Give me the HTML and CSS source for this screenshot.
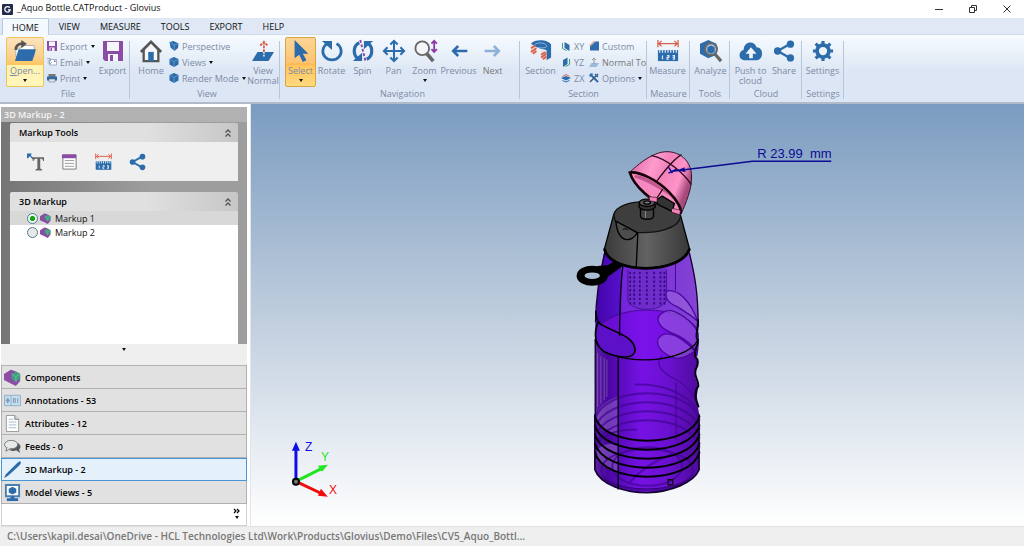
FILE: index.html
```html
<!DOCTYPE html>
<html lang="en">
<head>
    <meta charset="UTF-8">
    <meta name="viewport" content="width=device-width, initial-scale=1.0">
    <title>_Aquo Bottle.CATProduct - Glovius</title>
    <link rel="stylesheet" href="styles.css">
</head>
<body>

    <!-- Shared icons -->
    <svg class="sprite" aria-hidden="true">
        <symbol id="i-floppy" viewBox="0 0 20 20">
            <path fill="#8c4ba5" d="M0 0h20v20H2l-2-2z"/>
            <path fill="#f4f6fc" d="M4 1h12v9H4zM5 13h10v7H5z"/>
            <path fill="#8c4ba5" d="M7 14h3v6H7z"/>
        </symbol>
        <symbol id="i-cube" viewBox="0 0 20 20">
            <path fill="#2c6cab" d="M10 0l9 4v11l-9 5-9-5V4z"/>
            <path stroke="#8fb9e2" fill="none" d="M1 4l9 5 9-5M10 9v11"/>
        </symbol>
        <symbol id="i-ruler" viewBox="0 0 24 24">
            <path stroke="#d9604a" stroke-width="1.4" fill="none" d="M2 4h20M5 1L2 4l3 3M19 1l3 3-3 3M1 0v8M23 0v8"/>
            <path fill="#2c6cab" d="M1 11h22v12H1z"/>
            <path stroke="#dce9f8" stroke-width="1.3" d="M3 11v3M6 11v3M9 11v3M12 11v3M15 11v3M18 11v3M21 11v3M6 17v4M11 17h2v2h-2v2h2M17 17h2v4h-2M17 19h2" fill="none"/>
        </symbol>
        <symbol id="i-share" viewBox="0 0 24 24">
            <path stroke="#2c6cab" stroke-width="2.6" fill="none" d="M19 4L5 12l14 8"/>
            <g fill="#2c6cab"><circle cx="19" cy="4.500" r="4"/><circle cx="5" cy="12" r="4"/><circle cx="19" cy="19.500" r="4"/></g>
        </symbol>
        <symbol id="i-component" viewBox="0 0 20 20">
            <path fill="#8c4ba5" d="M0 6l8-5 4 1 7 4v8l-5 6-6-3-8-4z"/>
            <path fill="#3f9b7c" d="M9 6l5-3 5 3v6l-5 3-5-3z"/>
            <path stroke="#6cc7a6" fill="none" d="M9 6l5 3 5-3M14 9v6"/>
        </symbol>
        <symbol id="i-arrow" viewBox="0 0 24 24">
            <path fill="none" stroke="currentColor" stroke-width="3" d="M22 12H4M11 6l-6 6 6 6"/>
        </symbol>
        <symbol id="i-collapse" viewBox="0 0 8 10">
            <path fill="none" stroke="#555" stroke-width="1.3" d="M1.500 4.500L4 2l2.500 2.500M1.500 8.500L4 6l2.500 2.500"/>
        </symbol>
    </svg>

    <!-- Title bar -->
    <header class="titlebar">
        <svg class="app-icon" viewBox="0 0 12 12"><rect width="12" height="12" rx="1" fill="#232c4d"/><path d="M8.500 4A3 3 0 1 0 9 6.500H6.500" fill="none" stroke="#fff" stroke-width="1.400"/></svg>
        <h1>_Aquo Bottle.CATProduct - Glovius</h1>
        <div class="window-buttons">
            <button type="button" aria-label="Minimize"><svg viewBox="0 0 10 10"><path d="M1 5.500h8"/></svg></button>
            <button type="button" aria-label="Restore"><svg viewBox="0 0 10 10"><path d="M1.500 3.500h5v5h-5zM3.500 3.500v-2h5v5h-2"/></svg></button>
            <button type="button" aria-label="Close"><svg viewBox="0 0 10 10"><path d="M1.500 1.500l7 7M8.500 1.500l-7 7"/></svg></button>
        </div>
    </header>

    <!-- Tabs -->
    <nav class="tabs">
        <button type="button" class="active">HOME</button>
        <button type="button">VIEW</button>
        <button type="button">MEASURE</button>
        <button type="button">TOOLS</button>
        <button type="button">EXPORT</button>
        <button type="button">HELP</button>
    </nav>

    <!-- Ribbon -->
    <div class="ribbon">
        <section class="group group-file">
            <div class="tools">
                <button type="button" class="big open">
                    <svg viewBox="0 0 24 24"><path fill="#fff" stroke="#aab" d="M2 9h5l2-3h13v12H2z"/><path fill="#2c6cab" d="M5 10h19l-4 13H1z"/><path fill="none" stroke="#555" stroke-width="3" d="M2 11c0-6 3-7 8-7"/><path fill="#555" d="M8 0l6 4-6 5z"/></svg>
                    <span><u>O</u>pen...</span><i class="caret"></i>
                </button>
                <div class="stack">
                    <button type="button"><svg><use href="#i-floppy"/></svg>Export<i class="caret"></i></button>
                    <button type="button"><svg viewBox="0 0 20 20"><path fill="#fff" stroke="#8b9bb8" stroke-width="1.500" d="M5 5h14v11H5z"/><path fill="none" stroke="#8b9bb8" stroke-width="1.500" d="M5 15l5-5M0 3h7v5M1 8h6M1 12h6"/><path fill="#8c4ba5" d="M14 7h3v3h-3z"/></svg>Email<i class="caret"></i></button>
                    <button type="button"><svg viewBox="0 0 20 20"><path fill="#777" d="M3 2h14v6H3z"/><path fill="#2c6cab" d="M0 7h20v8H0z"/><path fill="#dfe6f0" stroke="#666" d="M4 12h12v6H4z"/></svg>Print<i class="caret"></i></button>
                </div>
                <button type="button" class="big export"><svg><use href="#i-floppy"/></svg><span>Export</span></button>
            </div>
            <h2>File</h2>
        </section>

        <section class="group group-view">
            <div class="tools">
                <button type="button" class="big">
                    <svg viewBox="0 0 24 24"><path fill="#f5f7fb" d="M4 11l8-8 8 8v12H4z"/><path fill="none" stroke="#555" stroke-width="2.500" d="M4 11v12h16V11"/><path fill="none" stroke="#555" stroke-width="3" d="M1 13L12 2l11 11"/><path fill="#2c6cab" d="M9 13h6v10H9z"/></svg>
                    <span>Home</span>
                </button>
                <div class="stack">
                    <button type="button"><svg viewBox="0 0 20 20"><path fill="#2c6cab" d="M1 2l8-2 10 5-1 9-7 6-8-7z"/><path fill="none" stroke="#8fb9e2" d="M1 2l9 6 9-3M10 8l1 12"/></svg>Perspective</button>
                    <button type="button"><svg><use href="#i-cube"/></svg>Views<i class="caret"></i></button>
                    <button type="button"><svg><use href="#i-cube"/></svg>Render Mode<i class="caret"></i></button>
                </div>
                <button type="button" class="big">
                    <svg viewBox="0 0 24 24"><path fill="#2c6cab" d="M6 13h18l-6 10H0z"/><path fill="none" stroke="#d9604a" stroke-width="2" stroke-dasharray="3 1" d="M13 13V3M9 6l4-4 4 4"/><path stroke="#fff" stroke-width="1.500" stroke-dasharray="2 1" d="M13 13v6"/></svg>
                    <span>View<br>Normal</span>
                </button>
            </div>
            <h2>View</h2>
        </section>

        <section class="group group-navigation">
            <div class="tools">
                <button type="button" class="big selected">
                    <svg viewBox="0 0 24 24"><path fill="#2c6cab" d="M5 0v20l5-4 4 8 4-2-4-7h6z"/></svg>
                    <span>Select</span><i class="caret"></i>
                </button>
                <button type="button" class="big">
                    <svg viewBox="0 0 24 24"><path fill="none" stroke="#2c6cab" stroke-width="3" d="M17 4a10 9.500 0 1 1-10 0"/><path fill="#2c6cab" d="M1 1h11v10z"/></svg>
                    <span>Rotate</span>
                </button>
                <button type="button" class="big">
                    <svg viewBox="0 0 24 24"><path fill="none" stroke="#2c6cab" stroke-width="3.500" d="M8 3C1 6 1 16 6 20M16 21c7-3 7-13 2-17"/><path fill="#2c6cab" d="M1 23h10V14zM23 1H13v9z"/><path stroke="#8c3ba5" stroke-width="2" stroke-dasharray="3 2" d="M9 0l6 24"/></svg>
                    <span>Spin</span>
                </button>
                <button type="button" class="big">
                    <svg viewBox="0 0 24 24"><path fill="none" stroke="#2c6cab" stroke-width="2.200" d="M12 1v22M1 12h22M8 5l4-4 4 4M8 19l4 4 4-4M5 8l-4 4 4 4M19 8l4 4-4 4"/></svg>
                    <span>Pan</span>
                </button>
                <button type="button" class="big">
                    <svg viewBox="0 0 24 24"><circle cx="9" cy="9" r="7.500" fill="#f2f5fa" stroke="#666" stroke-width="2"/><path stroke="#666" stroke-width="4" d="M14 15l7 8"/><path fill="none" stroke="#8c3ba5" stroke-width="2" d="M22 1v12M19 4l3-3 3 3M19 10l3 3 3-3"/></svg>
                    <span>Zoom</span><i class="caret"></i>
                </button>
                <button type="button" class="big previous"><svg><use href="#i-arrow"/></svg><span>Previous</span></button>
                <button type="button" class="big next"><svg><use href="#i-arrow"/></svg><span>Next</span></button>
            </div>
            <h2>Navigation</h2>
        </section>

        <section class="group group-section">
            <div class="tools">
                <button type="button" class="big">
                    <svg viewBox="0 0 24 24"><path fill="#2c6cab" d="M1 4c4-5 18-5 22 1v14l-5 3V11c-3-1-7-1-11-3z"/><path fill="none" stroke="#8fb9e2" d="M5 5c4-3 11-2 13 1s-7 3-10 2"/><path fill="#f3d9d4" d="M1 5l6 3v8l-6-3zM12 11l6 3v9l-6-4z"/><path stroke="#d9604a" stroke-width="2" d="M1 9l5-3M1 13l6-4M3 15l4-3M12 16l5-3M12 19l6-4M14 21l4-3"/></svg>
                    <span>Section</span>
                </button>
                <div class="stack planes">
                    <button type="button"><svg viewBox="0 0 20 20"><path fill="#2c6cab" d="M7 2l10 6v12L7 14z"/><path stroke="#3f9b7c" stroke-width="2" fill="none" d="M3 4v11l8 4"/></svg>XY</button>
                    <button type="button"><svg viewBox="0 0 20 20"><path fill="#2c6cab" d="M4 6l9-5v13l-9 6z"/><path stroke="#3f9b7c" stroke-width="2" fill="none" d="M17 4v11l-8 4"/></svg>YZ</button>
                    <button type="button"><svg viewBox="0 0 20 20"><path fill="#2c6cab" d="M0 10l10-4 10 4-10 5z"/><path stroke="#d9604a" stroke-width="2" fill="none" d="M3 7l7-4 7 4"/><path stroke="#2c6cab" stroke-width="2" fill="none" d="M3 15l7 3 7-3"/></svg>ZX</button>
                </div>
                <div class="stack">
                    <button type="button"><svg viewBox="0 0 20 20"><path fill="#2c6cab" d="M2 11L13 1h7v18H2z"/><path stroke="#d9604a" stroke-width="2" d="M1 10L11 0"/></svg>Custom</button>
                    <button type="button" class="normal-to"><svg viewBox="0 0 20 20"><path fill="#9db9db" d="M5 12h15l-5 8H0z"/><path fill="none" stroke="#999" stroke-width="2" d="M10 14V2M6 6l4-4 4 4"/></svg>Normal To</button>
                    <button type="button"><svg viewBox="0 0 20 20"><path stroke="#2c6cab" stroke-width="4" d="M2 2l16 16"/><path stroke="#456" stroke-width="3" d="M18 2L2 18"/><path stroke="#2c6cab" stroke-width="3" fill="none" d="M1 7l6-6M12 2l6 6"/></svg>Options<i class="caret"></i></button>
                </div>
            </div>
            <h2>Section</h2>
        </section>

        <section class="group group-measure">
            <div class="tools">
                <button type="button" class="big"><svg><use href="#i-ruler"/></svg><span>Measure</span></button>
            </div>
            <h2>Measure</h2>
        </section>

        <section class="group group-tools">
            <div class="tools">
                <button type="button" class="big">
                    <svg viewBox="0 0 24 24"><path fill="#2c6cab" d="M0 4l9-4 9 4v12l-9 4-9-5z"/><circle cx="12" cy="10" r="6.500" fill="#a9c6e6" stroke="#666" stroke-width="2.200"/><path fill="#2c6cab" d="M8 8l4-2 4 2v5l-4 2-4-2z"/><path stroke="#666" stroke-width="3.500" d="M16 15l7 8"/></svg>
                    <span>Analyze</span>
                </button>
            </div>
            <h2>Tools</h2>
        </section>

        <section class="group group-cloud">
            <div class="tools">
                <button type="button" class="big">
                    <svg viewBox="0 0 24 24"><path fill="#2c6cab" d="M5 22a5 5.500 0 0 1-1-11C4 1 16 0 18 8c8 0 8 13 1 14z"/><path fill="#edf4fc" d="M12 8l6 7h-4v5h-4v-5H6z"/></svg>
                    <span>Push to<br>cloud</span>
                </button>
                <button type="button" class="big"><svg><use href="#i-share"/></svg><span>Share</span></button>
            </div>
            <h2>Cloud</h2>
        </section>

        <section class="group group-settings">
            <div class="tools">
                <button type="button" class="big">
                    <svg viewBox="0 0 24 24"><circle cx="12" cy="12" r="6.500" fill="none" stroke="#2c6cab" stroke-width="4"/><path stroke="#2c6cab" stroke-width="3.500" d="M12 1v4M12 19v4M1 12h4M19 12h4M4 4l3 3M17 17l3 3M4 20l3-3M17 7l3-3"/></svg>
                    <span>Settings</span>
                </button>
            </div>
            <h2>Settings</h2>
        </section>
    </div>

    <div class="workspace">
        <!-- Side panel -->
        <aside class="sidebar">
            <h2 class="sidebar-title">3D Markup - 2</h2>
            <div class="panels">
                <section class="panel">
                    <header><h3>Markup Tools</h3><button type="button" aria-label="Collapse"><svg><use href="#i-collapse"/></svg></button></header>
                    <div class="markup-tools">
                        <button type="button" aria-label="Text"><svg viewBox="0 0 18 18"><path fill="#2c6cab" d="M0 0h5L4 2l3 3-1 1-3-3-2 2H0z"/><path fill="#666" d="M6 4h12v4h-1c0-2-1-2.500-3-2.500V16l2 1v1H9v-1l2-1V5.500C8 5.500 7 6 7 8H6z"/></svg></button>
                        <button type="button" aria-label="Note"><svg viewBox="0 0 18 18"><path fill="#fff" stroke="#777" d="M2 1.500h14v15H2z"/><path fill="#8c4ba5" d="M1 1h15v4H1z"/><path stroke="#999" d="M4 7.500h10M4 10.500h10M4 13.500h10"/></svg></button>
                        <button type="button" aria-label="Measure"><svg><use href="#i-ruler"/></svg></button>
                        <button type="button" aria-label="Share"><svg><use href="#i-share"/></svg></button>
                    </div>
                </section>
                <section class="panel panel-list">
                    <header><h3>3D Markup</h3><button type="button" aria-label="Collapse"><svg><use href="#i-collapse"/></svg></button></header>
                    <div class="markup-list">
                        <label class="current"><input type="radio" name="markup" checked><svg><use href="#i-component"/></svg>Markup 1</label>
                        <label><input type="radio" name="markup"><svg><use href="#i-component"/></svg>Markup 2</label>
                    </div>
                </section>
            </div>
            <div class="splitter"><i class="caret"></i></div>
            <nav class="sections">
                <button type="button"><svg><use href="#i-component"/></svg>Components</button>
                <button type="button"><svg viewBox="0 0 18 18"><path fill="#c4def0" stroke="#8fb0c8" d="M.5 3.500h17v11H.5zM7.500 3.500v11"/><path fill="none" stroke="#7f98ad" d="M2 9h4M4 6v6M10 7h2v4h-2zM14.500 6.500v5"/><circle cx="4" cy="9" r="1.500" fill="none" stroke="#7f98ad"/></svg>Annotations - 53</button>
                <button type="button"><svg viewBox="0 0 18 18"><path fill="#fff" stroke="#999" d="M2.500.5h9l4 4v13h-13z"/><path fill="#ddd" stroke="#777" d="M11.500.5v4h4"/><path stroke="#a9b8c8" d="M5 4.500h5M5 7.500h8M5 10.500h8M5 13.500h8"/></svg>Attributes - 12</button>
                <button type="button"><svg viewBox="0 0 18 18"><path fill="#55595f" d="M6 13c2 1 5 1 7 0l4 3-1-4c3-2 1-6-2-7z"/><ellipse cx="7.500" cy="7" rx="7" ry="4.500" fill="#e6e8ea" stroke="#777"/><path fill="#e6e8ea" stroke="#777" d="M3 10l-1 4 5-3"/></svg>Feeds - 0</button>
                <button type="button" class="active"><svg viewBox="0 0 18 18"><path fill="#2c6cab" d="M0 18l2-4L14 2l3-2 1 2-2 3L4 16z"/></svg>3D Markup - 2</button>
                <button type="button"><svg viewBox="0 0 18 18"><path fill="#fff" stroke="#4c7eb0" stroke-width="2" d="M2 1h14v12H2z"/><path fill="#2c6cab" d="M9 3l4 2v4l-4 2-4-2V5zM7 13h4v2h4v3H3v-3h4z"/></svg>Model Views - 5</button>
            </nav>
            <div class="more">
                <button type="button" aria-label="More sections"><svg viewBox="0 0 8 6"><path fill="none" stroke="#000" stroke-width="1.200" d="M1 1l2 2-2 2M4 1l2 2-2 2"/></svg><i class="caret"></i></button>
            </div>
        </aside>

        <!-- 3D view -->
        <main class="viewport">
            <svg class="scene" viewBox="250 104 774 422">
                <defs>
                    <linearGradient id="bodyFill">
                        <stop offset="0" stop-color="#5a22a0"/>
                        <stop offset=".12" stop-color="#4a06a0"/>
                        <stop offset=".25" stop-color="#5b0bc0"/>
                        <stop offset=".45" stop-color="#7612e4"/>
                        <stop offset=".7" stop-color="#6a10cf"/>
                        <stop offset="1" stop-color="#4e0b9c"/>
                    </linearGradient>
                    <linearGradient id="shoulderFill">
                        <stop offset="0" stop-color="#4204a8"/>
                        <stop offset=".24" stop-color="#5610cc"/>
                        <stop offset=".26" stop-color="#7424dc"/>
                        <stop offset="1" stop-color="#8444d4"/>
                    </linearGradient>
                    <linearGradient id="lidFill">
                        <stop offset="0" stop-color="#3a3a3a"/>
                        <stop offset=".5" stop-color="#626262"/>
                        <stop offset="1" stop-color="#383838"/>
                    </linearGradient>
                    <linearGradient id="pinkFill" x1="0" y1="0" x2="1" y2=".4">
                        <stop offset="0" stop-color="#d2609c"/>
                        <stop offset=".4" stop-color="#ff9bcd"/>
                        <stop offset=".6" stop-color="#f283bb"/>
                        <stop offset=".85" stop-color="#ff94c8"/>
                        <stop offset="1" stop-color="#a84a7c"/>
                    </linearGradient>
                    <path id="ring" d="M103 830C130 927 390 927 417 830"/>
                    <path id="backRing" d="M103 840C130 734 390 734 417 840"/>
                    <path id="holes" d="M0 398V492"/>
                </defs>

                <!-- Bottle, drawn at three times its size -->
                <g transform="translate(560 140) scale(.3333)" stroke-linecap="round" fill="none">
                    <path fill="url(#bodyFill)" d="M105 510L104 590L103 990C120 1038 200 1059 260 1059C330 1056 400 1030 416 990V820L408 780L413 740L404 710L412 670L404 640L413 590L413 510Z"/>
                    <path fill="url(#shoulderFill)" d="M132 330C118 400 106 470 105 575C150 490 370 490 413 575C416 460 400 390 387 330Z"/>
                    <ellipse cx="260" cy="585" rx="150" ry="72" fill="#7d12ef" opacity=".6"/>
                    <path stroke="#4b07a0" stroke-width="3" d="M106 570C150 490 370 490 413 570M345 350V450"/>

                    <!-- strainer -->
                    <path fill="#6a2cc4" opacity=".7" d="M202 385V480C210 515 300 520 318 480V385Z"/>
                    <path stroke="#4a129a" stroke-width="3" d="M202 390V480C210 515 300 520 318 480V390"/>
                    <g stroke="#3a0a84" stroke-width="6" stroke-dasharray="2 11">
                        <use href="#holes" x="209"/><use href="#holes" x="221"/><use href="#holes" x="238"/><use href="#holes" x="259"/><use href="#holes" x="281"/><use href="#holes" x="300"/><use href="#holes" x="312"/>
                    </g>

                    <!-- grips -->
                    <g fill="#a06cdf" fill-opacity=".5" stroke="#4b08a0" stroke-width="4">
                        <path d="M412 545C390 480 350 445 318 453C310 480 330 492 350 500C380 520 400 530 412 545Z"/>
                        <path d="M413 580C400 545 340 500 312 515C280 530 290 560 330 577C370 592 395 610 410 640C414 620 414 600 413 580Z"/>
                        <path d="M409 650C400 620 340 570 305 585C280 600 290 630 330 650C360 665 385 645 409 630Z"/>
                    </g>
                    <path stroke="#4b08a0" stroke-width="4" d="M305 648C285 665 295 690 330 710C370 728 400 760 412 795M347 730V900"/>
                    <g stroke="#9277ae" stroke-width="3" opacity=".6"><path d="M111 640V800M121 650V790M131 655V780M139 660V770"/></g>

                    <!-- rings -->
                    <path fill="#b79ad8" opacity=".35" d="M106 835C112 800 140 780 172 770V890C140 880 112 860 106 835ZM110 930C130 910 150 910 172 915V1000C140 990 120 970 110 950Z"/>
                    <g stroke="#410693" stroke-width="6" opacity=".7">
                        <path d="M226 734C290 732 370 750 410 810"/>
                        <use href="#backRing"/><use href="#backRing" y="27"/><use href="#backRing" y="54"/><use href="#backRing" y="81"/>
                        <path d="M106 920C120 890 160 868 226 870"/>
                        <ellipse cx="260" cy="980" rx="105" ry="58"/><ellipse cx="260" cy="990" rx="138" ry="62"/>
                        <path d="M205 1030C240 990 290 960 330 945"/>
                    </g>
                    <g stroke="#000" stroke-width="6">
                        <use href="#ring"/><use href="#ring" y="27"/><use href="#ring" y="54"/><use href="#ring" y="81"/><use href="#ring" y="108"/>
                    </g>
                    <path stroke="#14002c" stroke-width="5" d="M103 825V990C120 1038 200 1059 260 1059C330 1056 400 1030 416 990V825"/>
                    <path stroke="#30056a" stroke-width="3" d="M105 992C140 1065 370 1068 415 992"/>
                    <path stroke="#111" stroke-width="4" d="M323 1020h14v15h-14z"/>

                    <!-- outlines -->
                    <path stroke="#160033" stroke-width="4" d="M132 340C118 400 106 470 105 545M387 340C402 400 414 460 413 560M104 600V825"/>
                    <path stroke="#0b0018" stroke-width="6" d="M413 540C413 575 402 590 412 600C416 615 400 625 404 650C415 660 414 675 405 690C400 712 414 718 414 738C400 755 404 775 414 800"/>
                    <path stroke="#000" stroke-width="4" d="M187 380C180 430 178 500 177 590M173 650V1048"/>
                    <path stroke="#000" stroke-width="4" d="M104 600C130 680 370 680 413 600"/>
                    <path fill="#5c10c8" d="M112 548C140 585 220 590 224 630C222 660 170 655 130 635C105 615 98 585 112 548Z"/>
                    <path stroke="#000" stroke-width="5" d="M106 515C106 530 112 548 125 556C160 575 222 590 224 630C222 660 170 655 130 635C105 615 98 585 112 548"/>

                    <!-- carry loop -->
                    <path fill="#000" d="M110 378L142 375L165 362L187 378L140 412Z"/>
                    <ellipse cx="95" cy="407" rx="35" ry="18" stroke="#000" stroke-width="24"/>
                    <ellipse cx="95" cy="407" rx="23" ry="10" fill="#a9bdd5"/>

                    <!-- lid -->
                    <path fill="url(#lidFill)" stroke="#000" stroke-width="4" d="M160 222L132 325C150 402 360 402 387 325L360 225Z"/>
                    <path stroke="#000" stroke-width="8" d="M132 328C150 404 360 404 387 328"/>
                    <path fill="#3e3e3e" stroke="#111" stroke-width="4" d="M160 225C165 170 355 170 360 230C355 265 290 280 230 277L164 243Z"/>
                    <path fill="#4d4d4d" stroke="#000" stroke-width="4" d="M166 243C172 312 215 308 230 278ZM232 280L227 384"/>
                    <path stroke="#000" stroke-width="3" d="M188 268C194 264 200 266 202 270"/>
                    <path fill="#444" stroke="#000" stroke-width="4" d="M240 200V230C245 240 275 240 279 230V200"/>
                    <path stroke="#888" stroke-width="3" d="M255 210V232"/>
                    <ellipse cx="260" cy="197" rx="25" ry="13" fill="#333" stroke="#000" stroke-width="4"/>
                    <ellipse cx="260" cy="188" rx="24" ry="11" fill="#555" stroke="#000" stroke-width="4"/>
                    <ellipse cx="260" cy="187" rx="10" ry="5" fill="#777" stroke="#000" stroke-width="4"/>

                    <!-- cap -->
                    <path fill="url(#pinkFill)" stroke="#3a1028" stroke-width="3" d="M207 97C235 70 260 52 285 42C335 20 388 48 393 100C397 145 375 190 362 222L333 212Z"/>
                    <path fill="#f48abf" stroke="#150008" stroke-width="8" d="M208 97C235 92 290 120 325 155C352 182 364 208 360 218C350 222 335 213 318 200C280 188 220 140 208 97Z"/>
                    <path fill="#c2588e" d="M222 106C250 100 300 132 330 168C280 135 245 118 222 112Z"/>
                    <path stroke="#2a0a1c" stroke-width="4" d="M274 46C320 55 370 100 392 132M362 44C335 60 310 95 289 123M306 148L287 178"/>
                    <path fill="#333" stroke="#000" stroke-width="4" d="M290 178L305 168L342 190L335 214L290 192Z"/>
                    <path fill="#f283bb" stroke="#3a1028" stroke-width="2" d="M335 205L360 210L358 224L334 216ZM266 170L290 172V186L268 182Z"/>
                </g>

                <!-- Radius callout -->
                <path class="callout" d="M668 167l4 6M668 173l8-4M672 171l80-10h79"/>
                <path class="callout-head" d="M677 170l7-3 1 5z"/>
                <text class="callout-text" x="757" y="158" xml:space="preserve">R 23.99  mm</text>

                <!-- Axes -->
                <g stroke-width="3">
                    <path stroke="#0f0fe6" d="M295 481v-32"/><path fill="#0f0fe6" d="M291 451l4-9 4 9z"/>
                    <path stroke="#1fe61f" d="M296 481l26-13"/><path fill="#1fe61f" d="M317 466l10-1-6 7z"/>
                    <path stroke="#f00a0a" d="M296 482l25 12"/><path fill="#f00a0a" d="M317 496l10 1-7-8z"/>
                </g>
                <circle cx="295" cy="482" r="3" fill="#777" stroke="#000" stroke-width="2"/>
                <text class="axis axis-z" x="304" y="451">Z</text>
                <text class="axis axis-y" x="320" y="461">Y</text>
                <text class="axis axis-x" x="328" y="494">X</text>
            </svg>
        </main>
    </div>

    <footer class="statusbar">C:\Users\kapil.desai\OneDrive - HCL Technologies Ltd\Work\Products\Glovius\Demo\Files\CV5_Aquo_Bottl...</footer>

</body>
</html>
```

FILE: styles.css
```css
* {
    box-sizing: border-box;
}
body {
    margin: 0;
    height: 100vh;
    display: flex;
    flex-direction: column;
    font-family: "Open Sans", "Noto Sans", sans-serif;
    font-size: 9px;
    color: #111;
    background-color: #fff;
    overflow: hidden;
}
h1, h2, h3 {
    margin: 0;
    font-size: inherit;
    font-weight: normal;
}
button {
    font: inherit;
    color: inherit;
    background: none;
    border: 0;
    padding: 0;
    margin: 0;
    cursor: pointer;
}
svg {
    display: block;
    flex: none;
}
.sprite {
    display: none;
}
.caret {
    width: 0;
    height: 0;
    border: 2px solid transparent;
    border-top: 3px solid #111;
    border-bottom: 0;
}

/* Title bar */
.titlebar {
    display: flex;
    align-items: center;
    height: 18px;
    padding-left: 2px;
    gap: 4px;
}
.app-icon {
    width: 11px;
    height: 11px;
}
.titlebar h1 {
    flex: 1;
    line-height: 16px;
    padding-bottom: 2px;
}
.window-buttons {
    display: flex;
}
.window-buttons button {
    width: 34px;
    display: flex;
    justify-content: center;
}
.window-buttons svg {
    width: 10px;
    height: 10px;
    fill: none;
    stroke: #333;
}

/* Tabs */
.tabs {
    display: flex;
    height: 17px;
    padding-left: 2px;
    background-color: #dfe8f4;
    border-bottom: 1px solid #d0dae8;
}
.tabs button {
    height: 17px;
    padding: 0 10px;
}
.tabs .active {
    padding: 0 9px;
    background-color: #f4f9ff;
    border: 1px solid #b9c9de;
    border-bottom: 0;
    border-radius: 2px 2px 0 0;
}

/* Ribbon */
.ribbon {
    display: flex;
    height: 69px;
    padding-top: 2px;
    background: linear-gradient(#f6fbff, #dce6f4 55%, #dce7f5);
    border-bottom: 2px solid #b0bac9;
    color: #7c8aa5;
}
.group {
    display: flex;
    flex-direction: column;
    background: linear-gradient(#b9c5d8, #b9c5d8) right center / 1px 58px no-repeat;
}
.group h2 {
    text-align: center;
    line-height: 14px;
}
.tools {
    display: flex;
    height: 50px;
}
.group-file {
    width: 130px;
    padding-left: 6px;
}
.group-view {
    width: 150px;
    padding-left: 4px;
}
.group-navigation {
    width: 240px;
    padding-left: 5px;
}
.group-section {
    width: 127px;
}
.group-measure {
    width: 43px;
}
.group-tools {
    width: 40px;
}
.group-cloud {
    width: 72px;
}
.group-settings {
    width: 42px;
}
.big {
    display: flex;
    flex-direction: column;
    align-items: center;
    width: 31px;
    flex: none;
    padding-top: 3px;
    line-height: 10px;
    white-space: nowrap;
}
.big svg {
    width: 22px;
    height: 22px;
    margin-bottom: 4px;
    overflow: visible;
}
.big .caret {
    margin-top: 3px;
}
.open {
    width: 38px;
    padding-top: 2px;
    border: 1px solid #f0c35a;
    border-radius: 2px;
    background: linear-gradient(#fde3bd, #fbd08c 40%, #fdc65d 56%, #fff3b0 57%, #fff6bd);
}
.export {
    width: 36px;
}
.export svg {
    width: 20px;
}
.selected {
    padding-top: 2px;
    border: 1px solid #d6a640;
    border-radius: 2px;
    background: linear-gradient(#fcd596, #fdc473 50%, #ffb84e 56%, #ffc55d 57%, #ffd97e);
}
.group-view .big {
    width: 34px;
}
.group-section .big,
.group-measure .big,
.group-tools .big,
.group-cloud .big,
.group-settings .big {
    width: 41px;
}
.group-cloud .big + .big {
    width: 26px;
}
.previous {
    width: 37px;
}
.previous svg,
.next svg {
    width: 20px;
    color: #2c6cab;
}
.next svg {
    color: #8eb0d6;
    transform: scaleX(-1);
}
.next,
.normal-to {
    color: #777;
}
.stack {
    display: flex;
    flex-direction: column;
    padding: 1px 0 0 3px;
    flex: 1;
}
.stack.planes {
    flex: none;
    width: 28px;
    padding-left: 0;
}
.group-section .stack {
    padding-left: 0;
}
.group-view .stack {
    padding-left: 1px;
}
.stack button {
    display: flex;
    align-items: center;
    gap: 3px;
    height: 16px;
    white-space: nowrap;
}
.stack svg {
    width: 10px;
    height: 10px;
}

/* Workspace */
.workspace {
    flex: 1;
    display: flex;
    min-height: 0;
}
.sidebar {
    width: 251px;
    flex: none;
    display: flex;
    flex-direction: column;
    padding: 3px 3px 0 1px;
    border-right: 1px solid #e2e6ea;
}
.sidebar-title {
    height: 15px;
    padding-left: 3px;
    line-height: 15px;
    font-weight: 600;
    color: #f4f4f4;
    background-color: #b1b1b1;
}
.panels {
    flex: 1;
    display: flex;
    flex-direction: column;
    gap: 11px;
    min-height: 0;
    padding: 1px 9px 0;
    background: linear-gradient(90deg, #757575, #9d9d9d 60%);
}
.panel header {
    display: flex;
    align-items: center;
    justify-content: space-between;
    height: 19px;
    padding: 0 6px 0 9px;
    border-radius: 2px 2px 0 0;
    background: linear-gradient(90deg, #e0e0e0 60%, #c6c6c6);
}
.panel h3 {
    font-weight: 600;
    color: #000;
}
.panel header svg {
    width: 8px;
    height: 10px;
}
.markup-tools {
    display: flex;
    gap: 17px;
    padding: 11px 17px 10px;
    background-color: #efefef;
}
.markup-tools svg {
    width: 17px;
    height: 18px;
}
.panel-list {
    flex: 1;
    display: flex;
    flex-direction: column;
}
.markup-list {
    flex: 1;
    background-color: #fff;
}
.markup-list label {
    display: flex;
    align-items: center;
    height: 14px;
    padding-left: 17px;
}
.markup-list .current {
    background-color: #d8d8d8;
}
.markup-list input {
    appearance: none;
    width: 11px;
    height: 11px;
    margin: 0 2px 0 0;
    border: 1px solid #4d8296;
    border-radius: 50%;
    background-color: #e8e8e4;
}
.markup-list input:checked {
    background: radial-gradient(circle, #14a814 35%, #f2f5f2 45%);
}
.markup-list svg {
    width: 11px;
    height: 11px;
    margin-right: 4px;
}
.splitter {
    display: flex;
    justify-content: center;
    height: 22px;
    padding-top: 4px;
    background-color: #efefef;
    border-bottom: 1px solid #b4b4b4;
}
.sections {
    display: flex;
    flex-direction: column;
}
.sections button {
    display: flex;
    align-items: center;
    gap: 4px;
    height: 23px;
    padding-left: 2px;
    font-weight: 600;
    color: #000;
    background-color: #e1e1e1;
    border: 1px solid #b0b0b0;
    border-top: 0;
}
.sections .active {
    background-color: #e4f1fb;
    border: 1px solid #4795d5;
}
.sections svg {
    width: 17px;
    height: 17px;
}
.more {
    display: flex;
    justify-content: flex-end;
    height: 22px;
    padding: 4px 5px;
    border: 1px solid #d0d0d0;
    border-top: 0;
}
.more button {
    display: flex;
    flex-direction: column;
    align-items: center;
    gap: 2px;
}
.more svg {
    width: 8px;
    height: 6px;
}

/* 3D view */
.viewport {
    flex: 1;
    min-width: 0;
    background: linear-gradient(#7b9cc0, #bccbdc 48%, #fff);
}
.scene {
    width: 100%;
    height: 100%;
}
.callout {
    fill: none;
    stroke: #0b0b93;
    stroke-width: 1.5px;
}
.callout-head {
    fill: #0b0b93;
}
.callout-text {
    font-family: "Liberation Sans", sans-serif;
    font-size: 13px;
    fill: #0b0b93;
}
.axis {
    font-family: "Liberation Sans", sans-serif;
    font-size: 12px;
}
.axis-x {
    fill: #f00a0a;
}
.axis-y {
    fill: #1fe61f;
}
.axis-z {
    fill: #0f0fe6;
}

/* Status bar */
.statusbar {
    height: 20px;
    padding-left: 7px;
    font-size: 10px;
    font-weight: 600;
    line-height: 18px;
    white-space: nowrap;
    color: #777;
    background-color: #efefef;
    border-top: 1px solid #e0e0e0;
}
```
